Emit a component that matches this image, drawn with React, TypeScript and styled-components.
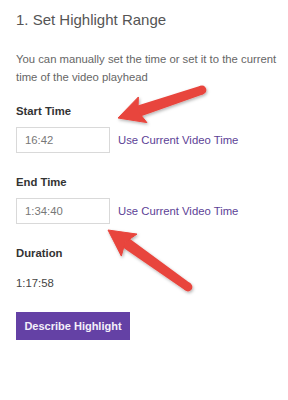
import React from "react";
import styled, { createGlobalStyle } from "styled-components";

const GlobalStyle = createGlobalStyle`
  html, body { margin: 0; padding: 0; background: #ffffff; }
  body { font-family: "Liberation Sans", Arial, sans-serif; }
`;

const Page = styled.div`
  position: relative;
  width: 288px;
  height: 400px;
  overflow: hidden;
  box-sizing: border-box;
  padding: 11px 6px 0 16px;
  display: flex;
  flex-direction: column;
  font-family: "Liberation Sans", Arial, sans-serif;
`;

const Title = styled.h2`
  margin: 0;
  font-size: 15px;
  line-height: 18px;
  font-weight: 400;
  color: #555555;
`;

const Intro = styled.p`
  margin: 21px 0 0 0;
  font-size: 11.3px;
  line-height: 18px;
  color: #666666;
`;

const Field = styled.div<{ $gap: number; $top: number }>`
  display: flex;
  flex-direction: column;
  gap: ${(p) => p.$gap}px;
  margin-top: ${(p) => p.$top}px;
`;

const Label = styled.div`
  font-size: 11.3px;
  line-height: 17px;
  font-weight: 700;
  color: #333333;
`;

const Row = styled.div`
  display: flex;
  align-items: center;
  gap: 8px;
`;

const TimeInput = styled.input`
  box-sizing: border-box;
  width: 94px;
  height: 26px;
  margin: 0;
  padding: 0 0 0 8px;
  border: 1px solid #d9d9d9;
  border-radius: 0;
  background: #ffffff;
  font-family: "Liberation Sans", Arial, sans-serif;
  font-size: 11.3px;
  color: #777777;
  outline: none;
`;

const Link = styled.a`
  font-size: 11.3px;
  line-height: 17px;
  color: #5c3f96;
  text-decoration: none;
  cursor: pointer;
`;

const Value = styled.div`
  font-size: 11.3px;
  line-height: 17px;
  color: #444444;
`;

const Button = styled.button`
  align-self: flex-start;
  margin-top: 20px;
  box-sizing: border-box;
  width: 114px;
  height: 28px;
  padding: 0;
  border: none;
  border-radius: 0;
  background: #6441a5;
  color: #f4f0fa;
  font-family: "Liberation Sans", Arial, sans-serif;
  font-size: 11px;
  font-weight: 700;
  cursor: pointer;
`;

const Overlay = styled.svg`
  position: absolute;
  left: 0;
  top: 0;
  pointer-events: none;
`;

type ArrowProps = {
  tail: [number, number];
  tip: [number, number];
};

function Arrow({ tail, tip }: ArrowProps) {
  const dx = tip[0] - tail[0];
  const dy = tip[1] - tail[1];
  const len = Math.hypot(dx, dy);
  const ux = dx / len;
  const uy = dy / len;
  const px = -uy;
  const py = ux;
  const headLen = 26;
  const half = 13.5;
  const bx = tip[0] - ux * headLen;
  const by = tip[1] - uy * headLen;
  const nx = tip[0] - ux * (headLen - 5);
  const ny = tip[1] - uy * (headLen - 5);
  const w1 = [bx + px * half, by + py * half];
  const w2 = [bx - px * half, by - py * half];
  const tw = 4.4;
  const hw = 5.6;
  const shaft = [
    [tail[0] + px * tw, tail[1] + py * tw],
    [nx + px * hw, ny + py * hw],
    [nx - px * hw, ny - py * hw],
    [tail[0] - px * tw, tail[1] - py * tw],
  ];
  return (
    <g filter="url(#shadow)">
      <circle cx={tail[0]} cy={tail[1]} r={tw} fill="#e8443c" />
      <polygon points={shaft.map((p) => p.join(",")).join(" ")} fill="#e8443c" />
      <polygon
        points={`${tip[0]},${tip[1]} ${w1[0]},${w1[1]} ${nx},${ny} ${w2[0]},${w2[1]}`}
        fill="#e8443c"
        strokeLinejoin="round"
        stroke="#e8443c"
        strokeWidth={1}
      />
    </g>
  );
}

export default function App() {
  return (
    <>
      <GlobalStyle />
      <Page>
        <Title>1. Set Highlight Range</Title>
        <Intro>
          You can manually set the time or set it to the current time of the video playhead
        </Intro>

        <Field $gap={7} $top={17}>
          <Label>Start Time</Label>
          <Row>
            <TimeInput defaultValue="16:42" />
            <Link>Use Current Video Time</Link>
          </Row>
        </Field>

        <Field $gap={7} $top={21}>
          <Label>End Time</Label>
          <Row>
            <TimeInput defaultValue="1:34:40" />
            <Link>Use Current Video Time</Link>
          </Row>
        </Field>

        <Field $gap={13} $top={21}>
          <Label>Duration</Label>
          <Value>1:17:58</Value>
        </Field>

        <Button>Describe Highlight</Button>

        <Overlay width={288} height={400} viewBox="0 0 288 400">
          <defs>
            <filter id="shadow" x="-20%" y="-20%" width="140%" height="140%">
              <feDropShadow dx="1" dy="1.5" stdDeviation="1.5" floodColor="#000" floodOpacity="0.3" />
            </filter>
          </defs>
          <Arrow tail={[202, 90]} tip={[118, 118]} />
          <Arrow tail={[188, 287]} tip={[108, 230]} />
        </Overlay>
      </Page>
    </>
  );
}
